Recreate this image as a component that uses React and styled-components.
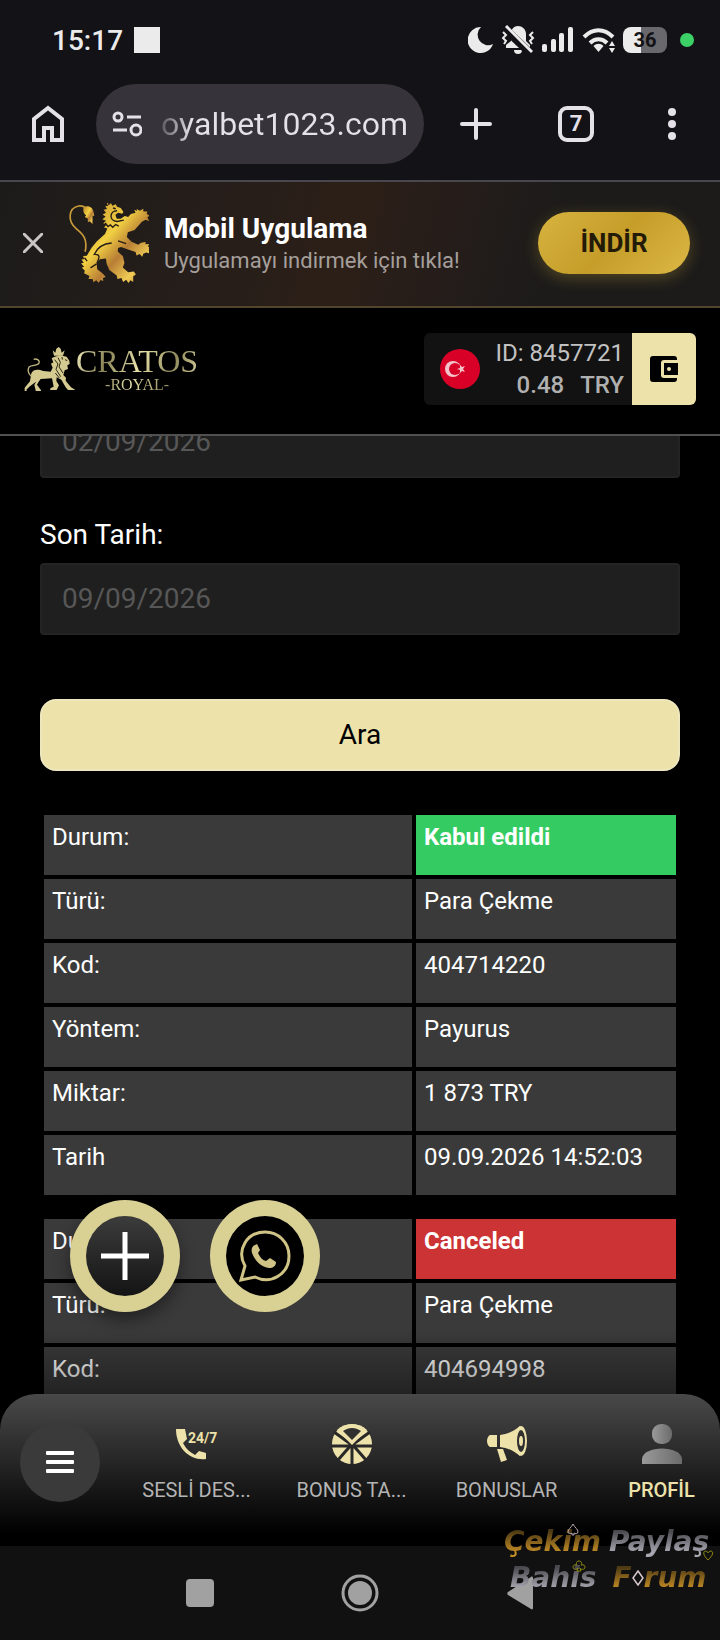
import { useLayoutEffect, useRef } from 'react'
import styled, { createGlobalStyle } from 'styled-components'

const TRANSACTIONS = [
	{
		id: 1,
		status: 'Kabul edildi',
		color: '#34cc62',
		rows: [
			['Türü:', 'Para Çekme'],
			['Kod:', '404714220'],
			['Yöntem:', 'Payurus'],
			['Miktar:', '1 873 TRY'],
			['Tarih', '09.09.2026 14:52:03'],
		],
	},
	{
		id: 2,
		status: 'Canceled',
		color: '#cb3334',
		rows: [
			['Türü:', 'Para Çekme'],
			['Kod:', '404694998'],
		],
	},
]

const NAV_ITEMS = [
	{ label: 'SESLİ DES...', Icon: PhoneIcon },
	{ label: 'BONUS TA...', Icon: WheelIcon },
	{ label: 'BONUSLAR', Icon: MegaphoneIcon },
	{ label: 'PROFİL', Icon: ProfileIcon, active: true },
]

const GlobalStyle = createGlobalStyle`
	* {
		box-sizing: border-box;
	}
	body {
		margin: 0;
		background: #000;
		color: #fff;
		font-family: Roboto, 'Liberation Sans', sans-serif;
	}
	button {
		padding: 0;
		border: 0;
		background: none;
		font: inherit;
		cursor: pointer;
	}
	a {
		text-decoration: none;
	}
	svg {
		display: block;
		flex: none;
	}
`

const Phone = styled.div`
	height: 100vh;
	display: flex;
	flex-direction: column;
	overflow: hidden;
	& > * {
		flex: none;
	}
`

const Status = styled.div`
	height: 80px;
	padding: 0 26px 0 52px;
	display: flex;
	align-items: center;
	background: #131217;
`

const Clock = styled.span`
	font-size: 28px;
	font-weight: 500;
	color: #ebebeb;
`

const Notification = styled.span`
	width: 26px;
	height: 26px;
	margin-left: 11px;
	background: #ebebeb;
`

const StatusIcons = styled.div`
	margin-left: auto;
	display: flex;
	align-items: center;
	gap: 7px;
`

const Battery = styled.span`
	width: 44px;
	height: 26px;
	border-radius: 8px;
	background: linear-gradient(90deg, #ebebeb 40%, #69686c 40%);
	color: #131217;
	font-size: 20px;
	font-weight: 700;
	line-height: 26px;
	text-align: center;
`

const PrivacyDot = styled.span`
	width: 14px;
	height: 14px;
	margin-left: 13px;
	border-radius: 50%;
	background: #3bd167;
`

const Browser = styled.div`
	height: 102px;
	padding: 4px 44px 16px 32px;
	display: flex;
	align-items: center;
	background: #131217;
	border-bottom: 2px solid #49474e;
`

const IconButton = styled.button`
	display: flex;
	align-items: center;
	justify-content: center;
`

const Address = styled.div`
	flex: 1;
	height: 80px;
	margin: 0 36px 0 32px;
	padding: 0 16px;
	display: flex;
	align-items: center;
	justify-content: space-between;
	border-radius: 40px;
	background: #36333a;
`

const Url = styled.span`
	font-size: 32px;
	background: linear-gradient(90deg, #5a575e, #e4e1e9 12%);
	background-clip: text;
	color: transparent;
`

const BrowserActions = styled.div`
	width: 216px;
	display: flex;
	align-items: center;
	justify-content: space-between;
`

const Tabs = styled.button`
	width: 36px;
	height: 36px;
	margin-right: 8px;
	border: 4px solid #e4e1e9;
	border-radius: 9px;
	color: #e4e1e9;
	font-size: 22px;
	font-weight: 700;
	line-height: 28px;
`

const Banner = styled.section`
	height: 126px;
	padding: 0 30px 2px 23px;
	display: flex;
	align-items: center;
	background: linear-gradient(105deg, #1c1b1a, #261e1a 30%, #2c1f17 48%, #261d1a 60%, #1c1b1a 76%);
	border-bottom: 2px solid #51452e;
	& > svg {
		margin-left: 24px;
	}
`

const BannerText = styled.div`
	flex: 1;
	margin-left: 15px;
	padding-top: 4px;
	display: flex;
	flex-direction: column;
`

const BannerTitle = styled.strong`
	font-size: 28px;
	line-height: 32px;
`

const BannerSub = styled.span`
	font-size: 22px;
	line-height: 32px;
	color: #a59f9b;
`

const Download = styled.button`
	width: 152px;
	height: 62px;
	border-radius: 31px;
	background: linear-gradient(135deg, #d6b340, #c69d29 50%, #dcb846);
	box-shadow: 0 4px 16px rgba(212, 175, 55, 0.3);
	color: #231a08;
	font-size: 26px;
	font-weight: 700;
`

const Header = styled.header`
	height: 128px;
	padding: 0 24px 4px;
	display: flex;
	align-items: center;
	background: #000;
	border-bottom: 2px solid #505050;
`

const Logo = styled.a`
	margin-right: auto;
	display: flex;
	align-items: center;
	font-family: 'Liberation Serif', serif;
`

const LogoText = styled.div`
	display: flex;
	flex-direction: column;
	align-items: center;
	background: linear-gradient(110deg, #f3eebd, #8b8557 25%, #e8e2aa 50%, #928b5c 75%, #e4dda6);
	background-clip: text;
	color: transparent;
`

const LogoName = styled.span`
	font-size: 32px;
	line-height: 32px;
`

const LogoTag = styled.span`
	font-size: 16px;
	line-height: 16px;
`

const Account = styled.div`
	height: 72px;
	padding: 0 8px 0 16px;
	display: flex;
	align-items: center;
	border-radius: 6px 0 0 6px;
	background: #121212;
`

const Balance = styled.div`
	margin-left: 16px;
	display: flex;
	flex-direction: column;
	align-items: flex-end;
	font-size: 24px;
	line-height: 32px;
	color: #c2c2c2;
`

const Amount = styled.span`
	display: flex;
	gap: 16px;
	font-weight: 500;
	color: #b0b0b0;
`

const Wallet = styled.button`
	width: 64px;
	height: 72px;
	display: flex;
	align-items: center;
	justify-content: center;
	border-radius: 0 6px 6px 0;
	background: #ede2aa;
`

const Main = styled.main`
	position: relative;
	&& {
		flex: 1;
	}
	min-height: 0;
	&::after {
		content: '';
		position: absolute;
		inset: auto 0 0;
		height: 64px;
		background: linear-gradient(transparent, rgba(0, 0, 0, 0.4));
		pointer-events: none;
	}
`

const Scroller = styled.div`
	height: 100%;
	padding: 0 40px 120px;
	overflow-y: auto;
	scrollbar-width: none;
`

const Form = styled.form`
	display: flex;
	flex-direction: column;
	font-size: 28px;
`

const Input = styled.input`
	width: 100%;
	height: 72px;
	padding: 0 20px 2px;
	border: 2px solid #242424;
	border-radius: 4px;
	background: #1f1f1f;
	color: #fff;
	font: inherit;
	&::placeholder {
		color: #575757;
		opacity: 1;
	}
`

const Label = styled.label`
	margin: 41px 0 12px;
	line-height: 32px;
`

const Search = styled.button`
	height: 72px;
	margin-top: 64px;
	padding-bottom: 2px;
	border: 2px solid #eee6bc;
	border-radius: 16px;
	background: #ede2aa;
	color: #000;
`

const Tables = styled.div`
	margin-top: 40px;
	display: flex;
	flex-direction: column;
	gap: 16px;
`

const Table = styled.table`
	width: 100%;
	border-spacing: 4px;
	font-size: 24px;
	line-height: 28px;
`

const Name = styled.th`
	height: 60px;
	padding: 8px;
	background: #3a3a3a;
	font-weight: 400;
	text-align: left;
	vertical-align: top;
`

const Value = styled.td`
	width: 260px;
	padding: 8px;
	background: ${({ $color }) => $color || '#3a3a3a'};
	font-weight: ${({ $color }) => ($color ? 700 : 400)};
	vertical-align: top;
`

const Floating = styled.div`
	position: absolute;
	left: 70px;
	bottom: 82px;
	z-index: 1;
	display: flex;
	gap: 30px;
`

const Fab = styled.button`
	width: 110px;
	height: 112px;
	display: flex;
	align-items: center;
	justify-content: center;
	border: 16px solid #d9d093;
	border-radius: 50%;
	background: ${({ $dark }) => ($dark ? '#000' : 'linear-gradient(#3c3c3c, #141414)')};
	background-clip: padding-box;
	box-shadow: ${({ $dark }) => ($dark ? 'none' : '0 8px 16px rgba(0, 0, 0, 0.4)')};
`

const Nav = styled.nav`
	height: 152px;
	padding-left: 20px;
	display: flex;
	background: linear-gradient(#494949, #000 92%);
	border-radius: 36px 36px 0 0;
	overflow: hidden;
`

const MenuButton = styled.button`
	flex: none;
	width: 80px;
	height: 80px;
	margin: 28px 19px 0 0;
	display: flex;
	align-items: center;
	justify-content: center;
	border-radius: 50%;
	background: #3a3a3a;
`

const NavList = styled.div`
	display: flex;
	overflow: hidden;
`

const NavItem = styled.a`
	flex: none;
	width: 155px;
	padding-top: 30px;
	display: flex;
	flex-direction: column;
	align-items: center;
	gap: 14px;
	color: ${({ $active }) => ($active ? '#ede2aa' : '#b4b4b4')};
	font-size: 20px;
	font-weight: ${({ $active }) => ($active ? 500 : 400)};
	line-height: 24px;
`

const IconText = styled.text`
	font-size: 14px;
	font-weight: 700;
`

const System = styled.div`
	position: relative;
	height: 94px;
	padding: 0 186px;
	display: flex;
	align-items: center;
	justify-content: space-between;
	background: #111;
`

const Watermark = styled.div`
	position: absolute;
	top: -22px;
	right: 0;
	width: 216px;
	display: flex;
	flex-direction: column;
	font-family: 'DejaVu Sans', sans-serif;
	font-size: 28px;
	font-style: italic;
	font-weight: 700;
	line-height: 36px;
	pointer-events: none;
`

const Line = styled.div`
	padding-left: ${({ $indent }) => ($indent ? 6 : 0)}px;
	display: flex;
	gap: ${({ $indent }) => ($indent ? 16 : 8)}px;
`

const Word = styled.span`
	display: flex;
	align-items: center;
	background: ${({ $silver }) =>
		$silver ? 'linear-gradient(#4a494e 20%, #aaa8b2 80%)' : 'linear-gradient(#4d3a14 20%, #c48d26 80%)'};
	background-clip: text;
	color: transparent;
`

const Suits = styled.svg`
	position: absolute;
	inset: 0;
`

function StatusBar() {
	return (
		<Status>
			<Clock>15:17</Clock>
			<Notification />
			<StatusIcons>
				<svg width="26" height="26" viewBox="0 0 26 26" fill="#ebebeb">
					<path d="M13 0a13 13 0 1 0 12 17A10.500 10.500 0 0 1 13 0z" />
				</svg>
				<svg width="34" height="30" viewBox="0 0 34 30" fill="#ebebeb">
					<path d="M10 9c0-5 3-8 7-8s8 3 8 8v7l4 4v3H5v-3l5-4z" />
					<path d="M13 25h8a4 4 0 0 1-8 0z" />
					<path d="M3 3 29 28" stroke="#131217" strokeWidth="8" />
					<path d="M5 1 31 27" stroke="#ebebeb" strokeWidth="3" />
					<path d="M2 7l3 3-3 3 3 3-2 3M32 7l-3 3 3 3-3 3 2 3" fill="none" stroke="#ebebeb" strokeWidth="2" />
				</svg>
				<svg width="33" height="26" viewBox="0 0 33 26" fill="#ebebeb">
					<rect x="0" y="17" width="5" height="8" rx="2" />
					<rect x="9" y="12" width="5" height="13" rx="2" />
					<rect x="17" y="6" width="5" height="19" rx="2" />
					<rect x="26" y="0" width="5" height="25" rx="2" />
				</svg>
				<svg width="34" height="26" viewBox="0 0 34 26" fill="none" stroke="#ebebeb" strokeWidth="4">
					<path d="M2 10c9-9 20-9 29 0M8 16c5-5 12-5 17 0" />
					<path d="M16.500 25l-5-6c3-3 7-3 10 0z" fill="#ebebeb" stroke="none" />
					<path d="M30 14l3 5h-6zM30 26l3-5h-6z" fill="#ebebeb" stroke="none" />
				</svg>
				<Battery>36</Battery>
			</StatusIcons>
			<PrivacyDot />
		</Status>
	)
}

function BrowserBar() {
	return (
		<Browser>
			<IconButton aria-label="Home">
				<svg width="32" height="38" viewBox="0 0 32 38" fill="none" stroke="#e4e1e9" strokeWidth="4">
					<path d="M2 35V14L16 3l14 11v21H20V23h-8v12z" />
				</svg>
			</IconButton>
			<Address>
				<svg width="30" height="26" viewBox="0 0 30 26" fill="none" stroke="#e4e1e9" strokeWidth="3">
					<circle cx="6" cy="6" r="4" />
					<path d="M15 6h14M1 19h14" />
					<circle cx="24" cy="19" r="5" />
				</svg>
				<Url>oyalbet1023.com</Url>
			</Address>
			<BrowserActions>
				<IconButton aria-label="New tab">
					<svg width="32" height="32" viewBox="0 0 32 32" stroke="#e4e1e9" strokeWidth="4" strokeLinecap="round">
						<path d="M16 2v28M2 16h28" />
					</svg>
				</IconButton>
				<Tabs>7</Tabs>
				<IconButton aria-label="Menu">
					<svg width="8" height="32" viewBox="0 0 8 32" fill="#e4e1e9">
						<circle cx="4" cy="4" r="4" />
						<circle cx="4" cy="16" r="4" />
						<circle cx="4" cy="28" r="4" />
					</svg>
				</IconButton>
			</BrowserActions>
		</Browser>
	)
}

function AppBanner() {
	return (
		<Banner>
			<IconButton aria-label="Kapat">
				<svg width="20" height="20" viewBox="0 0 20 20" stroke="#c9c7c6" strokeWidth="3">
					<path d="M0 0 20 20M20 0 0 20" />
				</svg>
			</IconButton>
			<GoldLion />
			<BannerText>
				<BannerTitle>Mobil Uygulama</BannerTitle>
				<BannerSub>Uygulamayı indirmek için tıkla!</BannerSub>
			</BannerText>
			<Download>İNDİR</Download>
		</Banner>
	)
}

function SiteHeader() {
	return (
		<Header>
			<Logo href="#">
				<WalkingLion />
				<LogoText>
					<LogoName>CRATOS</LogoName>
					<LogoTag>-ROYAL-</LogoTag>
				</LogoText>
			</Logo>
			<Account>
				<svg width="40" height="40" viewBox="0 0 40 40">
					<circle cx="20" cy="20" r="20" fill="#d80027" />
					<circle cx="13" cy="20" r="8" fill="#f3c3c9" />
					<circle cx="15" cy="20" r="6" fill="#d80027" />
					<path d="M17 20l3-1 0-3 2 2 3-1-2 3 2 3-3-1-2 2 0-3z" fill="#f3c3c9" />
				</svg>
				<Balance>
					<span>ID: 8457721</span>
					<Amount>
						<span>0.48</span>
						<span>TRY</span>
					</Amount>
				</Balance>
			</Account>
			<Wallet aria-label="Para yatır">
				<svg width="28" height="26" viewBox="0 0 28 26">
					<path d="M3 0h21a3 3 0 0 1 3 3v20a3 3 0 0 1-3 3H3a3 3 0 0 1-3-3V3a3 3 0 0 1 3-3z" />
					<path d="M28 4H14a3 3 0 0 0-3 3v12a3 3 0 0 0 3 3h14z" fill="#ede2aa" />
					<path d="M28 7H14v12h14z" />
					<circle cx="19" cy="13" r="2" fill="#ede2aa" />
				</svg>
			</Wallet>
		</Header>
	)
}

function TransactionTable({ item }) {
	return (
		<Table>
			<tbody>
				<tr>
					<Name scope="row">Durum:</Name>
					<Value $color={item.color}>{item.status}</Value>
				</tr>
				{item.rows.map(([name, value]) => (
					<tr key={name}>
						<Name scope="row">{name}</Name>
						<Value>{value}</Value>
					</tr>
				))}
			</tbody>
		</Table>
	)
}

function History() {
	const scroller = useRef(null)

	useLayoutEffect(() => {
		scroller.current.scrollTop = 30
	}, [])

	return (
		<Main>
			<Scroller ref={scroller}>
				<Form onSubmit={(e) => e.preventDefault()}>
					<Input aria-label="İlk Tarih" placeholder="02/09/2026" />
					<Label htmlFor="end-date">Son Tarih:</Label>
					<Input id="end-date" placeholder="09/09/2026" />
					<Search type="submit">Ara</Search>
				</Form>
				<Tables>
					{TRANSACTIONS.map((item) => (
						<TransactionTable key={item.id} item={item} />
					))}
				</Tables>
			</Scroller>
			<Floating>
				<Fab aria-label="Ekle">
					<svg width="50" height="50" viewBox="0 0 50 50" stroke="#fff" strokeWidth="5">
						<path d="M25 1v48M1 25h48" />
					</svg>
				</Fab>
				<Fab $dark aria-label="WhatsApp">
					<svg width="54" height="52" viewBox="0 0 54 52" fill="none" stroke="#cfc485" strokeWidth="3">
						<path d="M3 50l4-14C-2 20 9 2 27 2c13 0 24 10 24 24 0 18-18 29-34 21z" />
						<path
							d="M17 15c-3 1-4 4-3 8 3 8 9 14 17 15 4 0 7-2 7-6l-6-4-4 3c-4-1-6-4-8-8l2-3-3-6z"
							fill="#cfc485"
							stroke="none"
						/>
					</svg>
				</Fab>
			</Floating>
		</Main>
	)
}

function BottomNav() {
	return (
		<Nav>
			<MenuButton aria-label="Menü">
				<svg width="28" height="22" viewBox="0 0 28 22" fill="#fff">
					<rect width="28" height="4" rx="1" />
					<rect y="9" width="28" height="4" rx="1" />
					<rect y="18" width="28" height="4" rx="1" />
				</svg>
			</MenuButton>
			<NavList>
				{NAV_ITEMS.map(({ label, Icon, active }) => (
					<NavItem key={label} href="#" $active={active}>
						<Icon />
						<span>{label}</span>
					</NavItem>
				))}
			</NavList>
		</Nav>
	)
}

function SystemNav() {
	return (
		<System>
			<IconButton aria-label="Recents">
				<svg width="28" height="28" viewBox="0 0 28 28" fill="#a1a1a1">
					<rect width="28" height="28" rx="4" />
				</svg>
			</IconButton>
			<IconButton aria-label="Home screen">
				<svg width="40" height="40" viewBox="0 0 40 40" fill="#a1a1a1">
					<circle cx="20" cy="20" r="17" fill="none" stroke="#a1a1a1" strokeWidth="3" />
					<circle cx="20" cy="20" r="12" />
				</svg>
			</IconButton>
			<IconButton aria-label="Back">
				<svg width="28" height="34" viewBox="0 0 28 34" fill="#a1a1a1">
					<path d="M25 1c1-1 2 0 2 1v30c0 1-1 2-2 1L2 19c-1-1-1-2 0-3z" />
				</svg>
			</IconButton>
			<Watermark>
				<Line>
					<Word>Çekim</Word>
					<Word $silver>Paylaş</Word>
				</Line>
				<Line $indent>
					<Word $silver>Bahis</Word>
					<Word>
						F
						<svg width="12" height="16" viewBox="0 0 12 16" fill="none" stroke="#d8c8cc" strokeWidth="1.500">
							<path d="M6 1l5 7-5 7-5-7z" />
						</svg>
						rum
					</Word>
				</Line>
				<Suits width="216" height="72" viewBox="0 0 216 72" fill="none">
					<path d="M69 0c2 4 5 5 5 8 0 2-3 2-4 1v2h-2V9c-1 1-4 1-4-1 0-3 3-4 5-8z" stroke="#b9a9ae" />
					<path d="M204 36c-5-5-5-8-3-9 1 0 3 1 3 2 0-1 2-2 3-2 3 1 2 4-3 9z" stroke="#8c8a12" />
					<path
						d="M75 37c3 0 3 3 2 4 3-1 4 1 4 2 0 3-4 3-5 1l1 3h-4l1-3c-1 2-5 2-5-1 0-1 1-3 4-2-1-1-1-4 2-4z"
						stroke="#8c8a12"
					/>
				</Suits>
			</Watermark>
		</System>
	)
}

function GoldLion() {
	return (
		<svg width="82" height="82" viewBox="200 66 244 244">
			<defs>
				<linearGradient id="gold" x1="0" y1="0" x2="1" y2="1">
					<stop offset="0" stopColor="#c08a2c" />
					<stop offset="0.400" stopColor="#f2d043" />
					<stop offset="0.600" stopColor="#b87e35" />
					<stop offset="0.800" stopColor="#f0cc55" />
					<stop offset="1" stopColor="#b4762a" />
				</linearGradient>
			</defs>
			<g fill="url(#gold)">
				<path d="M249 82c14-8 28 0 30 14l2 12-5-2 0 26-8-9-6 3 0-11-9-4 4-5c-7-5-10-13-8-24z" />
				<path d="M318 70l4 7 9-7 4 7 10-4 4 7 11 4 8 12-4 5-12-3-8 6 4 12 12 0 12-8 10 3 8-9 14-4-4-9 9 4-2-6 10 5 10-6 0 8 12 0-2 8 9 4-7 6 6 11-11-4-11 6-10 11-12 13-20 7-3 14 14 14 20 9 8-6 14-2-1 7 11-1-3 8 9 3-7 6 4 11-11-3-9 4-3 9-8-8-9 4-3-10-20-7-23-8-9 3-1 10 15 14 5 20-5 14 16 14 17-2 6 9-8 5 0 17-8-5-6 8-7-10-9 7-5-12-12 3-2-10-22-17-8-18-2-16-18 2-10 12 2 18 18 14 7 9-8 3 1 9-8-3-6 8-7-7-8 6-3-10-12 0 3-9-16-8 2-8-9-8 7-3-9-11 8-1-7-10 8-1-3-9 11-1 14-24 16-19 24-22 7-16-10-4 9-8-12-3 9-8-11-5 10-7-9-7 10-5-7-9 10-2-5-9 10 0-3-9 10 1z" />
			</g>
			<path d="M254 214c8-38-6-52-26-68-27-22-25-62 7-68 8-1 15 1 20 5" fill="none" stroke="#c99a3a" strokeWidth="5" />
			<g fill="none" stroke="#261c16" strokeWidth="4">
				<path d="M349 92c-22 0-26 30 0 32l20-4M301 126l9 8 5-4 7 9 7-5 7 7 9-8 9 5M333 188c-26 2-44 16-52 34 20-2 15 12 8 26M352 182l24 8M270 262l18-12M252 232l8 10" />
				<path d="M337 84l8 2" strokeWidth="5" />
			</g>
		</svg>
	)
}

function WalkingLion() {
	return (
		<svg width="52" height="44" viewBox="74 112 156 132">
			<g fill="#d5cb91">
				<path d="M160 122l8 7 3-12 7-5 6 5 3 12 9-7-5 16h-27z" />
				<path d="M164 142l18-5 20 4 8 12 1 10-7 4 2 11-10 4-4 14 8 8-1 9 16 20 13 8h-22l-7-8-13-23-14-7-1 11 8 13-7 14h-20l2-6 9-4-5-25-34 2-6 8-5 9 12 17 0 5h-16l0-5-4-16 5-10-20 15-9 9 3 8H76v-14l16-19 4-24c6-13 20-13 36-7l22 2 6-12-5-12 7-4-5-12z" />
			</g>
			<path d="M96 200c-10-8-12-20-7-28 8-8 26-2 30-12 3-10-9-14-16-11" fill="none" stroke="#c3ba82" strokeWidth="4" />
			<path d="M166 150l10 13-6 16 14 22M176 144l7 14-4 14 12 18M188 142l1 8M197 150l7 3M168 190l12 15" fill="none" stroke="#292615" strokeWidth="3" />
		</svg>
	)
}

function PhoneIcon() {
	return (
		<svg width="44" height="40" viewBox="0 0 44 40" fill="#ede2aa">
			<path d="M1 5h9l2 10-4 4c3 6 7 9 12 12l4-4 7 2v6C15 37 1 24 1 5z" />
			<IconText x="13" y="19">
				24/7
			</IconText>
		</svg>
	)
}

function WheelIcon() {
	return (
		<svg width="40" height="40" viewBox="0 0 40 40">
			<circle cx="20" cy="20" r="20" fill="#ede2aa" />
			<path d="M20 20V41M0 22h40M20 21 2 8M20 21 38 8M20 20 6 36M20 20l14 16" stroke="#282828" strokeWidth="3" />
			<path d="M5 6C13-2 27-2 35 6L20 21z" fill="#ede2aa" />
			<path d="M11 7c6-4 12-4 18 0l-9 9z" fill="#303030" />
		</svg>
	)
}

function MegaphoneIcon() {
	return (
		<svg width="40" height="40" viewBox="0 0 40 40" fill="#ede2aa">
			<path d="M3 11h7v12H3c-4-2-4-10 0-12zM13 11c8-1 14-4 20-9v30c-6-5-12-8-20-9z" />
			<path d="M10 25h6l4 11-6 2z" />
			<ellipse cx="34" cy="17" rx="6" ry="15" />
			<ellipse cx="34" cy="17" rx="4" ry="11" fill="#303030" />
			<ellipse cx="34" cy="17" rx="2" ry="5" />
		</svg>
	)
}

function ProfileIcon() {
	return (
		<svg width="40" height="40" viewBox="0 0 40 40">
			<defs>
				<linearGradient id="grey">
					<stop offset="0" stopColor="#9a9a9a" />
					<stop offset="1" stopColor="#6b6b6b" />
				</linearGradient>
			</defs>
			<rect x="10" width="20" height="20" rx="9" fill="url(#grey)" />
			<path d="M0 40v-5c1-14 39-14 40 0v5z" fill="url(#grey)" />
		</svg>
	)
}

function App() {
	return (
		<>
			<GlobalStyle />
			<Phone>
				<StatusBar />
				<BrowserBar />
				<AppBanner />
				<SiteHeader />
				<History />
				<BottomNav />
				<SystemNav />
			</Phone>
		</>
	)
}
export default App
